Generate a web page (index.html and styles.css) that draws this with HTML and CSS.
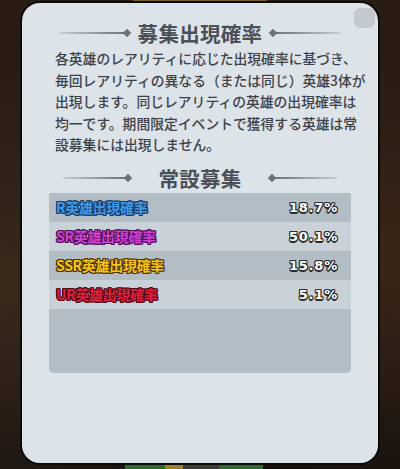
FILE: index.html
```html
<!DOCTYPE html>
<html lang="ja">
<head>
<meta charset="utf-8">
<link rel="stylesheet" href="styles.css">
</head>
<body>
<div class="scene">
  <div class="bg-top"></div>
  <div class="bg-bottom">
    <span class="bb green"></span><span class="bb gold"></span><span class="bb dark"></span><span class="bb green2"></span>
  </div>
  <div class="panel">
    <div class="close"></div>
    <div class="heading">
      <span class="rule left"></span><span class="dia"></span>
      <h1 class="title">募集出現確率</h1>
      <span class="dia"></span><span class="rule right"></span>
    </div>
    <p class="desc">各英雄のレアリティに応じた出現確率に基づき、<br>毎回レアリティの異なる（または同じ）英雄3体が<br>出現します。同じレアリティの英雄の出現確率は<br>均一です。期間限定イベントで獲得する英雄は常<br>設募集には出現しません。</p>
    <div class="heading sub">
      <span class="rule left"></span><span class="dia"></span>
      <h2 class="title">常設募集</h2>
      <span class="dia"></span><span class="rule right"></span>
    </div>
    <div class="table">
      <div class="row odd"><span class="label r">R英雄出現確率</span><span class="pct">18.7%</span></div>
      <div class="row"><span class="label sr">SR英雄出現確率</span><span class="pct">50.1%</span></div>
      <div class="row odd"><span class="label ssr">SSR英雄出現確率</span><span class="pct">15.8%</span></div>
      <div class="row"><span class="label ur">UR英雄出現確率</span><span class="pct">5.1%</span></div>
    </div>
  </div>
</div>
</body>
</html>
```

FILE: styles.css
```css
html, body {
  margin: 0;
  padding: 0;
}
body {
  width: 400px;
  height: 469px;
  overflow: hidden;
  background: #1e1510;
  font-family: "Noto Sans CJK JP", "Noto Sans", sans-serif;
}
.scene {
  position: relative;
  width: 400px;
  height: 469px;
  background:
    radial-gradient(ellipse at 0% 60%, #3a2a1c 0%, rgba(0,0,0,0) 60%),
    radial-gradient(ellipse at 100% 55%, #3a2618 0%, rgba(0,0,0,0) 60%),
    linear-gradient(#2a1c12, #18120e);
  padding: 3px 22px 6px 22px;
  box-sizing: border-box;
}
.bg-top {
  position: absolute;
  left: 133px;
  top: 0;
  width: 134px;
  height: 4px;
  background: #7a6020;
}
.bg-bottom {
  position: absolute;
  left: 125px;
  bottom: 0;
  height: 6px;
  display: flex;
}
.bb { display: block; height: 6px; }
.bb.green { width: 40px; background: #2a6a2a; }
.bb.gold { width: 18px; background: #a08020; }
.bb.dark { width: 36px; background: #3a3a30; }
.bb.green2 { width: 44px; background: #2a6a2a; }
.panel {
  position: relative;
  height: 460px;
  background: #dce3e9;
  border-radius: 18px;
  box-shadow: 0 0 0 2px #0c0a08;
  padding-top: 18px;
  box-sizing: border-box;
}
.close {
  position: absolute;
  right: 3px;
  top: 5px;
  width: 21px;
  height: 20px;
  border-radius: 6px;
  background: #c3c9cf;
}
.heading {
  display: flex;
  align-items: center;
  justify-content: center;
  height: 24px;
}
.title {
  margin: 0 8px;
  font-size: 20.5px;
  line-height: 24px;
  font-weight: 700;
  color: #4b5058;
  letter-spacing: 0.3px;
}
.rule {
  display: block;
  height: 2px;
  width: 64px;
  background: #6c727a;
}
.rule.left { background: linear-gradient(90deg, rgba(108,114,122,0.2), #6c727a); }
.rule.right { background: linear-gradient(90deg, #6c727a, rgba(108,114,122,0.2)); }
.dia {
  display: block;
  width: 6px;
  height: 6px;
  background: #6c727a;
  transform: rotate(45deg);
}
.desc {
  margin: 3px 0 0 33px;
  font-size: 13.8px;
  line-height: 21.5px;
  font-weight: 500;
  color: #3c4249;
  white-space: nowrap;
}
.heading.sub {
  margin-top: 10px;
}
.heading.sub .title {
  margin: 0 27px;
}
.heading.sub .rule { width: 62px; }
.table {
  margin: 3px 27px 0 27px;
  height: 180px;
  background: #b3bdc6;
  border-radius: 2px 2px 5px 5px;
}
.row {
  display: flex;
  align-items: center;
  justify-content: space-between;
  height: 29px;
  padding: 0 13px 0 7px;
  background: #cad2d9;
}
.row.odd { background: #b3bdc6; }
.label {
  font-size: 14px;
  font-weight: 700;
  letter-spacing: -0.3px;
}
.label.r {
  color: #3d9be6;
  text-shadow: 1px 0 0 #1b3660, -1px 0 0 #1b3660, 0 1px 0 #1b3660, 0 -1px 0 #1b3660, 1px 1px 0 #1b3660, -1px -1px 0 #1b3660, 1px -1px 0 #1b3660, -1px 1px 0 #1b3660;
}
.label.sr {
  color: #d03fd6;
  text-shadow: 1px 0 0 #4a104e, -1px 0 0 #4a104e, 0 1px 0 #4a104e, 0 -1px 0 #4a104e, 1px 1px 0 #4a104e, -1px -1px 0 #4a104e, 1px -1px 0 #4a104e, -1px 1px 0 #4a104e;
}
.label.ssr {
  color: #f3c41e;
  text-shadow: 1px 0 0 #4a3300, -1px 0 0 #4a3300, 0 1px 0 #4a3300, 0 -1px 0 #4a3300, 1px 1px 0 #4a3300, -1px -1px 0 #4a3300, 1px -1px 0 #4a3300, -1px 1px 0 #4a3300;
}
.label.ur {
  color: #e2203e;
  text-shadow: 1px 0 0 #4a0812, -1px 0 0 #4a0812, 0 1px 0 #4a0812, 0 -1px 0 #4a0812, 1px 1px 0 #4a0812, -1px -1px 0 #4a0812, 1px -1px 0 #4a0812, -1px 1px 0 #4a0812;
}
.pct {
  font-family: "DejaVu Sans", sans-serif;
  font-size: 13px;
  font-weight: 700;
  color: #ffffff;
  letter-spacing: 0.8px;
  text-shadow: 1px 0 0 #2a2d33, -1px 0 0 #2a2d33, 0 1px 0 #2a2d33, 0 -1px 0 #2a2d33, 1px 1px 0 #2a2d33, -1px -1px 0 #2a2d33, 1px -1px 0 #2a2d33, -1px 1px 0 #2a2d33, 0 2px 0 #2a2d33;
}
```
